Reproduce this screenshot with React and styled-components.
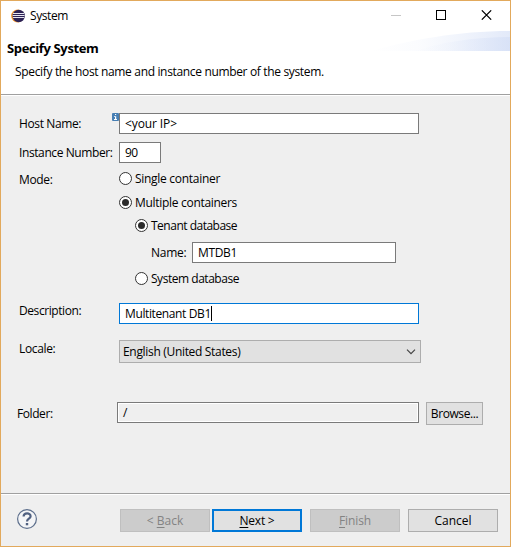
import React from 'react';
import styled, { createGlobalStyle } from 'styled-components';

const Global = createGlobalStyle`
  *, *::before, *::after { box-sizing: border-box; }
  body { margin: 0; }
`;

const Window = styled.main`
  display: flex;
  flex-direction: column;
  width: 511px;
  height: 547px;
  border: 1px solid #e2a95c;
  background: #efefef;
  color: #000;
  font: 12px/16px "Open Sans", "Noto Sans", sans-serif;
  white-space: nowrap;
`;

const Header = styled.header`
  height: 95px;
  background: #fff;
  border-bottom: 1px solid #fff;
  box-shadow: inset 0 -1px #a0a0a0;
`;

const TitleBar = styled.div`
  display: flex;
  align-items: center;
  height: 29px;
  padding-left: 10px;
`;

const TitleText = styled.span`
  flex: 1;
  margin-left: 5px;
  letter-spacing: -0.4px;
`;

const WindowControls = styled.div`
  display: flex;
  align-items: center;
  gap: 35px;
  height: 10px;
  margin: 0 18px 1px 0;
  svg { display: block; }
`;

const Banner = styled.div`
  display: grid;
  grid-template-columns: 1fr 140px;
`;

const Headings = styled.div`
  padding: 9px 0 0 6px;
`;

const Heading = styled.h1`
  margin: 0;
  font-size: 13px;
  line-height: 18px;
  font-weight: 700;
  letter-spacing: -0.37px;
`;

const Subheading = styled.p`
  margin: 7px 0 0 8px;
  letter-spacing: -0.34px;
`;

const Swoosh = styled.svg`
  display: block;
`;

const Form = styled.section`
  flex: 1;
  padding: 17px 0 0 18px;
`;

const Row = styled.div`
  display: flex;
  align-items: ${(p) => p.$align || 'center'};
  height: ${(p) => p.$h || 21}px;
  margin-top: ${(p) => p.$top || 0}px;
  padding-left: ${(p) => p.$indent || 0}px;
  margin-left: ${(p) => p.$outdent || 0}px;
`;

const Label = styled.label`
  flex: none;
  width: ${(p) => p.$w || 100}px;
  letter-spacing: ${(p) => p.$ls || 0}px;
  transform: translateY(${(p) => p.$dy || 0}px);
`;

const Field = styled.div`
  position: relative;
  display: flex;
  align-items: center;
  width: ${(p) => p.$w}px;
  height: 21px;
  padding-left: 5px;
  border: 1px solid ${(p) => (p.$focused ? '#0078d7' : '#7a7a7a')};
  background: ${(p) => (p.$readOnly ? '#efefef' : '#fff')};
  box-shadow: ${(p) => (p.$readOnly ? 'inset 0 0 0 1px #fff' : 'none')};
  letter-spacing: ${(p) => p.$ls || 0}px;
`;

const Caret = styled.i`
  width: 1px;
  height: 15px;
  background: #000;
`;

const InfoBadge = styled.svg`
  position: absolute;
  left: -8px;
  top: -1px;
`;

const Radio = styled.span`
  display: grid;
  place-items: center;
  width: 13px;
  height: 13px;
  border: 1px solid #333;
  border-radius: 50%;
  background: #fff;
  &::after {
    content: '';
    width: 7px;
    height: 7px;
    border-radius: 50%;
    background: ${(p) => (p.$checked ? '#2b2b2b' : 'transparent')};
  }
`;

const RadioText = styled.span`
  margin-left: 3px;
  padding-top: 1px;
  letter-spacing: ${(p) => p.$ls}px;
`;

const Select = styled.div`
  display: flex;
  align-items: center;
  justify-content: space-between;
  width: 302px;
  height: 23px;
  padding: 0 4px 0 3px;
  border: 1px solid #adadad;
  background: #e1e1e1;
  letter-spacing: -0.32px;
`;

const Button = styled.button`
  width: ${(p) => p.$w || 90}px;
  height: 23px;
  margin: 0 0 0 ${(p) => p.$gap || 0}px;
  padding: 0;
  border: ${(p) => (p.$primary ? '2px solid #0078d7' : `1px solid ${p.disabled ? '#bfbfbf' : '#adadad'}`)};
  background: ${(p) => (p.disabled ? '#cccccc' : '#e1e1e1')};
  color: ${(p) => (p.disabled ? '#838383' : '#000')};
  font: inherit;
  letter-spacing: ${(p) => p.$ls || 0}px;
  u { text-underline-offset: 2px; text-decoration-skip-ink: none; }
`;

const Footer = styled.footer`
  display: flex;
  align-items: flex-start;
  height: 53px;
  padding: 15px 0 0 15px;
  border-top: 1px solid #a0a0a0;
  box-shadow: inset 0 1px #fff;
`;

const Help = styled.svg`
  flex: none;
  width: 22px;
  height: 22px;
  margin-right: 82px;
`;

function EclipseLogo() {
  return (
    <svg width="14" height="14" viewBox="0 0 14 14">
      <circle cx="6.5" cy="7" r="6.4" fill="#f39a35" />
      <circle cx="7.7" cy="7" r="6.2" fill="#2c2255" />
      <path d="M2 4.5h11.2M1.6 6.5h12M2 8.5h11.2" stroke="#e6e4f0" strokeWidth="1" />
    </svg>
  );
}

function Option({ text, checked, ls, ...row }) {
  return (
    <Row $h={15} {...row}>
      <Radio $checked={checked} />
      <RadioText $ls={ls}>{text}</RadioText>
    </Row>
  );
}

export default function App() {
  return (
    <>
      <Global />
      <Window>
        <Header>
          <TitleBar>
            <EclipseLogo />
            <TitleText>System</TitleText>
            <WindowControls>
              <svg width="10" height="10" shapeRendering="crispEdges">
                <path d="M0 5.5h10" stroke="#c6c6c6" />
              </svg>
              <svg width="10" height="10" shapeRendering="crispEdges">
                <rect x=".5" y=".5" width="9" height="9" fill="none" stroke="#000" />
              </svg>
              <svg width="11" height="10">
                <path d="M.8 .3l9.4 9.4M10.2 .3L.8 9.7" stroke="#000" strokeWidth="1.15" />
              </svg>
            </WindowControls>
          </TitleBar>
          <Banner>
            <Headings>
              <Heading>Specify System</Heading>
              <Subheading>Specify the host name and instance number of the system.</Subheading>
            </Headings>
            <Swoosh width="140" height="21">
              <defs>
                <linearGradient id="swoosh" x1="0" x2="1">
                  <stop offset="0" stopColor="#dbe4f8" stopOpacity="0" />
                  <stop offset=".35" stopColor="#dbe4f8" stopOpacity=".12" />
                  <stop offset="1" stopColor="#d3def6" stopOpacity=".65" />
                </linearGradient>
              </defs>
              <path d="M0 21C42 10 86 1 140 1V21Z" fill="url(#swoosh)" />
              <path d="M45 21C72 12 105 7 140 7V21Z" fill="url(#swoosh)" />
            </Swoosh>
          </Banner>
        </Header>

        <Form>
          <Row>
            <Label $ls={-0.38}>Host Name:</Label>
            <Field $w={300} $ls={-0.1}>
              <InfoBadge width="7" height="8">
                <rect width="7" height="8" rx="1" fill="#477fb4" />
                <path d="M3 1h1.2v1H3zM2 3.2h2.2V6H5v1H2V6h1V4H2z" fill="#fff" />
              </InfoBadge>
              &lt;your IP&gt;
            </Field>
          </Row>
          <Row $top={8}>
            <Label $ls={-0.4}>Instance Number:</Label>
            <Field $w={42} $ls={-0.5}>90</Field>
          </Row>
          <Row $top={8} $h={15}>
            <Label $ls={-0.35} $dy={0.5}>Mode:</Label>
            <Radio />
            <RadioText $ls={-0.29}>Single container</RadioText>
          </Row>
          <Option $top={9} $indent={100} checked text="Multiple containers" ls={-0.3} />
          <Option $top={8} $indent={116} checked text="Tenant database" ls={-0.5} />
          <Row $top={9} $indent={132}>
            <Label $w={41} $ls={-0.25}>Name:</Label>
            <Field $w={204} $ls={-0.34}>MTDB1</Field>
          </Row>
          <Option $top={8} $indent={116} text="System database" ls={-0.47} />
          <Row $top={17}>
            <Label $ls={-0.42} $dy={-3}>Description:</Label>
            <Field $w={300} $focused $ls={-0.38}>Multitenant DB1<Caret /></Field>
          </Row>
          <Row $top={16} $h={23}>
            <Label $ls={-0.35} $dy={-3}>Locale:</Label>
            <Select>
              English (United States)
              <svg width="10" height="6">
                <path d="M1 .7L5 4.7L9 .7" fill="none" stroke="#444" strokeWidth="1.2" />
              </svg>
            </Select>
          </Row>
          <Row $top={39} $h={23} $outdent={-2} $align="flex-start">
            <Label $ls={-0.42} $dy={4}>Folder:</Label>
            <Field $w={302} $readOnly>/</Field>
            <Button $w={57} $gap={7} $ls={-0.42}>Browse...</Button>
          </Row>
        </Form>

        <Footer>
          <Help viewBox="0 0 22 22">
            <circle cx="11" cy="10" r="9.4" fill="#f4f5f7" stroke="#5d6f8c" strokeWidth="1.2" />
            <path d="M7.6 7.6C7.6 3.2 14.6 3.4 14.6 7.2C14.6 9.8 11 9.6 11 12.6" fill="none" stroke="#506181" strokeWidth="2.2" />
            <rect x="9.8" y="14" width="2.4" height="2.3" fill="#506181" />
          </Help>
          <Button disabled>&lt; <u>B</u>ack</Button>
          <Button $primary $gap={2} $ls={-0.22}><u>N</u>ext &gt;</Button>
          <Button disabled $gap={8} $ls={-0.11}><u>F</u>inish</Button>
          <Button $gap={8}>Cancel</Button>
        </Footer>
      </Window>
    </>
  );
}
